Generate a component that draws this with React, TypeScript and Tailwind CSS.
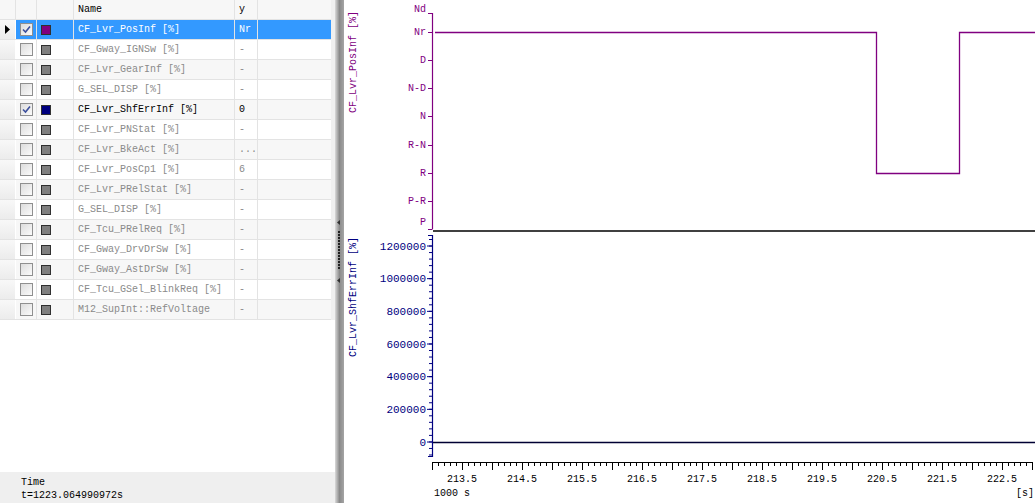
import React from 'react';

type Row = {
  name: string;
  value: string;
  checked?: boolean;
  color: string;
  selected?: boolean;
};

const rows: Row[] = [
  { name: 'CF_Lvr_PosInf [%]', value: 'Nr', checked: true, color: '#800080', selected: true },
  { name: 'CF_Gway_IGNSw [%]', value: '-', color: '#808080' },
  { name: 'CF_Lvr_GearInf [%]', value: '-', color: '#808080' },
  { name: 'G_SEL_DISP [%]', value: '-', color: '#808080' },
  { name: 'CF_Lvr_ShfErrInf [%]', value: '0', checked: true, color: '#000080' },
  { name: 'CF_Lvr_PNStat [%]', value: '-', color: '#808080' },
  { name: 'CF_Lvr_BkeAct [%]', value: '...', color: '#808080' },
  { name: 'CF_Lvr_PosCp1 [%]', value: '6', color: '#808080' },
  { name: 'CF_Lvr_PRelStat [%]', value: '-', color: '#808080' },
  { name: 'G_SEL_DISP [%]', value: '-', color: '#808080' },
  { name: 'CF_Tcu_PRelReq [%]', value: '-', color: '#808080' },
  { name: 'CF_Gway_DrvDrSw [%]', value: '-', color: '#808080' },
  { name: 'CF_Gway_AstDrSw [%]', value: '-', color: '#808080' },
  { name: 'CF_Tcu_GSel_BlinkReq [%]', value: '-', color: '#808080' },
  { name: 'M12_SupInt::RefVoltage', value: '-', color: '#808080' },
];

const cols = 'grid grid-cols-[16px_21px_37px_161px_23px_73px]';

const Checkbox = ({ checked }: { checked?: boolean }) => (
  <div className="w-[13px] h-[13px] border border-[#8f8f8f] bg-gradient-to-br from-[#dcdcdc] to-[#fbfbfb] flex items-center justify-center">
    {checked && (
      <svg width="9" height="9" viewBox="0 0 9 9">
        <path d="M1 4.5 L3.5 7 L8 1.5" fill="none" stroke="#3c4f9c" strokeWidth="1.6" />
      </svg>
    )}
  </div>
);

const DataTable = () => (
  <div className="flex">
    <div className="w-[331px] text-[10px] font-['Liberation_Mono',monospace]">
      <div className={`${cols} h-[20px] bg-[#f7f7f7] border-b border-[#e3e3e3]`}>
        <div className="border-r border-[#e3e3e3]" />
        <div className="border-r border-[#e3e3e3]" />
        <div className="border-r border-[#e3e3e3]" />
        <div className="border-r border-[#e3e3e3] pl-[4px] flex items-center text-black">Name</div>
        <div className="border-r border-[#e3e3e3] pl-[4px] flex items-center text-black">y</div>
        <div />
      </div>
      {rows.map((r, i) => {
        const text = r.selected ? 'text-white' : r.checked ? 'text-black' : 'text-[#8a8a8a]';
        const bg = r.selected ? 'bg-[#3399ff]' : i % 2 === 0 ? 'bg-[#f7f7f7]' : 'bg-white';
        return (
          <div key={i} className={`${cols} h-[20px] border-b border-[#e3e3e3]`}>
            <div className="bg-gradient-to-b from-[#f8f8f8] to-[#ececec] border-r border-white flex items-center pl-[5px]">
              {r.selected && (
                <svg width="5" height="9" viewBox="0 0 5 9">
                  <path d="M0 0 L5 4.5 L0 9 Z" fill="#000" />
                </svg>
              )}
            </div>
            <div className={`${bg} border-r border-[#e3e3e3] flex items-center pl-[4px]`}>
              <Checkbox checked={r.checked} />
            </div>
            <div className={`${bg} border-r border-[#e3e3e3] flex items-center pl-[4px]`}>
              <div className="w-[10px] h-[10px] border border-[#303030]" style={{ background: r.color }} />
            </div>
            <div className={`${bg} ${text} border-r border-[#e3e3e3] flex items-center pl-[4px] whitespace-nowrap overflow-hidden`}>
              {r.name}
            </div>
            <div className={`${bg} ${text} border-r border-[#e3e3e3] flex items-center pl-[4px] whitespace-nowrap overflow-hidden`}>
              {r.value}
            </div>
            <div className={bg} />
          </div>
        );
      })}
    </div>
    <div className="w-[4px] bg-[#f0f0f0]" />
  </div>
);

const Splitter = () => (
  <div className="w-[9px] h-full bg-gradient-to-r from-[#dadada] via-[#8a8a8a] to-[#a5a5a5] flex items-center justify-center">
    <svg width="9" height="66" viewBox="0 0 9 66">
      <path d="M2 3.5 L5 1 L5 6 Z" fill="#303030" />
      {Array.from({ length: 13 }).map((_, i) => (
        <rect key={i} x="3" y={12 + i * 3} width="2" height="2" fill="#202020" />
      ))}
      <path d="M2 61.5 L5 59 L5 64 Z" fill="#303030" />
    </svg>
  </div>
);

const Chart = () => {
  const upperTicks = [32, 60, 88, 116, 145, 173, 201, 229];
  const upperLabels: [string, number][] = [
    ['Nd', 12], ['Nr', 35], ['D', 63], ['N-D', 91], ['N', 119],
    ['R-N', 148], ['R', 176], ['P-R', 204], ['P', 225],
  ];
  const lowerValues = ['1200000', '1000000', '800000', '600000', '400000', '200000', '0'];
  const major = (k: number) => 246 + k * 32.67;
  const minor = Array.from({ length: 35 }).map((_, i) => 239.5 + i * 6.53).filter((y) => y < 457);
  const xTicks = Array.from({ length: 101 }).map((_, i) => 432 + i * 6);
  const xLabels = Array.from({ length: 10 }).map((_, i) => ({ x: 462 + i * 60, t: (213.5 + i).toFixed(1) }));

  return (
    <div className="flex-1 h-full bg-white">
      <svg width="691" height="503" viewBox="344 0 691 503" fontFamily="'Liberation Mono', monospace">
        {/* upper signal */}
        <text transform="translate(356 62) rotate(-90)" textAnchor="middle" fontSize="10" fill="#800080">CF_Lvr_PosInf [%]</text>
        <line x1="432.5" y1="13" x2="432.5" y2="229" stroke="#800080" strokeWidth="1.2" />
        <line x1="428" y1="13.5" x2="432.5" y2="13.5" stroke="#800080" />
        {upperTicks.map((y) => (
          <line key={y} x1="428" y1={y + 0.5} x2="432.5" y2={y + 0.5} stroke="#800080" />
        ))}
        {upperLabels.map(([t, y]) => (
          <text key={t + y} x="426" y={y} textAnchor="end" fontSize="10" fill="#800080">{t}</text>
        ))}
        <polyline points="435,32.5 876.5,32.5 876.5,173.5 959.5,173.5 959.5,32.5 1035,32.5" fill="none" stroke="#800080" strokeWidth="1.3" />
        <line x1="433" y1="231" x2="1035" y2="231" stroke="#000" strokeWidth="1.4" />

        {/* lower signal */}
        <text transform="translate(356 297) rotate(-90)" textAnchor="middle" fontSize="10" fill="#000080">CF_Lvr_ShfErrInf [%]</text>
        <line x1="432.5" y1="235" x2="432.5" y2="457" stroke="#000080" strokeWidth="1.2" />
        <line x1="428" y1="235.5" x2="432.5" y2="235.5" stroke="#000080" />
        <line x1="428" y1="456.5" x2="432.5" y2="456.5" stroke="#000080" />
        {minor.map((y) => (
          <line key={y} x1="429" y1={y} x2="432.5" y2={y} stroke="#000080" />
        ))}
        {lowerValues.map((v, k) => (
          <g key={v}>
            <line x1="427" y1={major(k)} x2="432.5" y2={major(k)} stroke="#000080" />
            <text x="426" y={major(k) + 3.5} textAnchor="end" fontSize="11" fill="#000080">{v}</text>
          </g>
        ))}
        <line x1="433" y1="442.5" x2="1035" y2="442.5" stroke="#000033" strokeWidth="1.3" />

        {/* time axis */}
        <line x1="432" y1="462.5" x2="1033" y2="462.5" stroke="#000" />
        {xTicks.map((x, i) => (
          <line key={x} x1={x + 0.5} y1="462" x2={x + 0.5} y2={(i - 5) % 5 === 0 ? 470 : 466} stroke="#000" />
        ))}
        {xLabels.map((l) => (
          <text key={l.t} x={l.x} y="482" textAnchor="middle" fontSize="10" fill="#000">{l.t}</text>
        ))}
        <text x="434" y="496" fontSize="10" fill="#000">1000 s</text>
        <text x="1034" y="496" textAnchor="end" fontSize="10" fill="#000">[s]</text>
      </svg>
    </div>
  );
};

export default function App() {
  return (
    <div className="w-[1035px] h-[503px] flex bg-white overflow-hidden">
      <div className="w-[335px] h-full flex flex-col">
        <DataTable />
        <div className="flex-1 bg-white" />
        <div className="h-[31px] bg-[#efefef] pl-[21px] pt-[4px] text-[10px] leading-[13px] text-black font-['Liberation_Mono',monospace]">
          <div>Time</div>
          <div>t=1223.064990972s</div>
        </div>
      </div>
      <Splitter />
      <Chart />
    </div>
  );
}
